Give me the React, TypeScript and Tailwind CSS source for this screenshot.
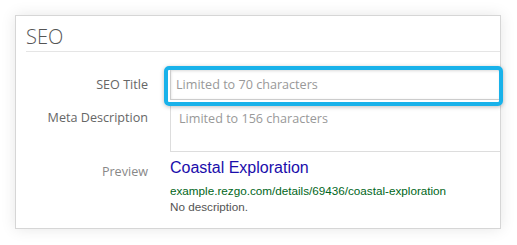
const Field = ({ label, children, labelClass = 'pt-0' }: { label: string; children: React.ReactNode; labelClass?: string }) => (
  <div className="flex">
    <div className={`w-[132px] shrink-0 text-right text-[12.6px] text-[#666] ${labelClass}`}>{label}</div>
    <div className="ml-[22px] flex-1">{children}</div>
  </div>
)

const App = () => {
  return (
    <main className="h-[245px] w-[517px] bg-white p-[15px]" style={{ fontFamily: '"Open Sans", sans-serif' }}>
      <div className="relative h-[214px] w-[486px] border border-[#d6d6d6] bg-white shadow-[0_0_14px_rgba(0,0,0,0.10)]">
        <div className="ml-[10px] h-[36px] border-b border-[#e5e5e5]">
          <h2 className="pt-[10px] text-[20px] leading-[22px] font-light text-[#555]">SEO</h2>
        </div>

        <div className="mt-[17px] flex flex-col">
          <Field label="SEO Title" labelClass="pt-[7px]">
            <div className="h-[31px] border-y border-l border-[#ccc] pl-[5px] text-[12.6px] leading-[30px] text-[#999] shadow-[inset_0_1px_3px_rgba(0,0,0,0.15)]">
              Limited to 70 characters
            </div>
          </Field>
          <div className="mt-[5px]">
            <Field label="Meta Description" labelClass="pt-[4px]">
              <div className="h-[47px] border-y border-l border-[#ddd] pt-[3px] pl-[8px] text-[12.6px] leading-[20px] text-[#999]">
                Limited to 156 characters
              </div>
            </Field>
          </div>
          <div className="mt-[6px]">
            <Field label="Preview" labelClass="pt-[5px] text-[#888]">
              <div style={{ fontFamily: '"Liberation Sans", Arial, sans-serif' }}>
                <div className="text-[16px] leading-[20px] text-[#1a0dab]">Coastal Exploration</div>
                <div className="mt-[4px] text-[11.7px] leading-[18px] text-[#006621]">example.rezgo.com/details/69436/coastal-exploration</div>
                <div className="-mt-[1px] text-[11.7px] leading-[16px] text-[#545454]">No description.</div>
              </div>
            </Field>
          </div>
        </div>

        <div className="absolute top-[50px] left-[148px] h-[40px] w-[339px] rounded-[5px] border-[4px] border-[#19b2ea] shadow-[0_1px_4px_rgba(0,0,0,0.25)]" />
      </div>
    </main>
  )
}

export default App
